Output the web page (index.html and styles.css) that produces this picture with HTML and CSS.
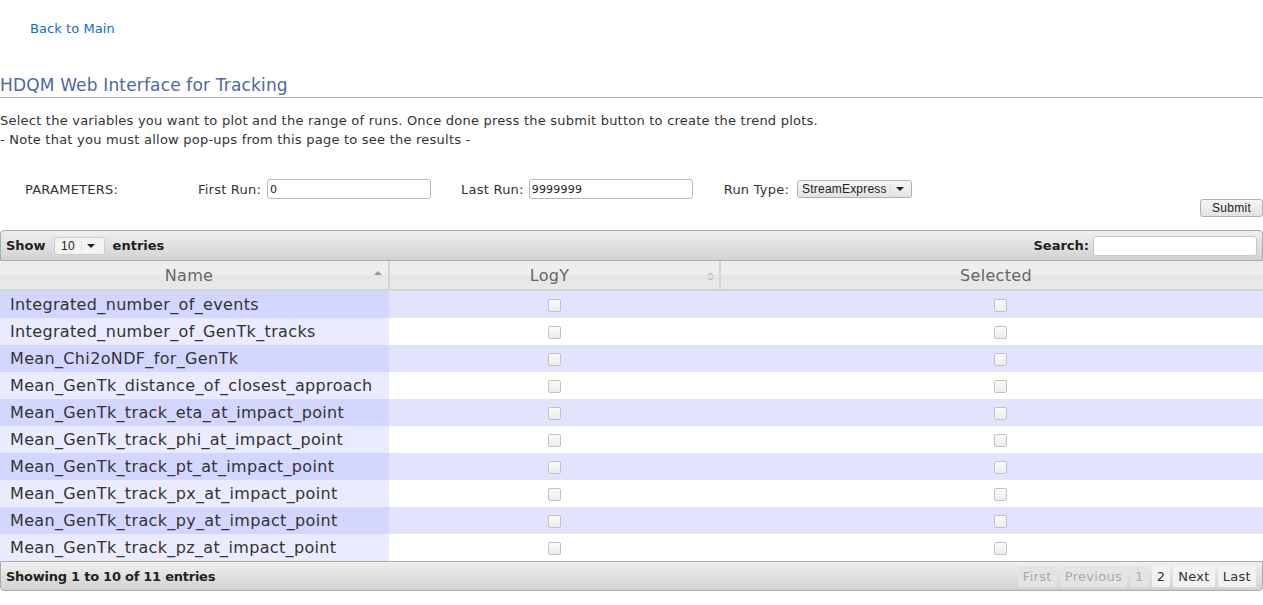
FILE: index.html
```html
<!DOCTYPE html>
<html>
<head>
<meta charset="utf-8">
<title>HDQM Web Interface for Tracking</title>
<link rel="stylesheet" href="styles.css">
</head>
<body>
<div class="top-link"><a href="#">Back to Main</a></div>
<h1 class="title">HDQM Web Interface for Tracking</h1>
<p class="intro">Select the variables you want to plot and the range of runs. Once done press the submit button to create the trend plots.<br>- Note that you must allow pop-ups from this page to see the results -</p>

<div class="params">
  <span class="plabel">PARAMETERS:</span>
  <label class="field f-first">First Run: <input class="txt" type="text" value="0"></label>
  <label class="field f-last">Last Run: <input class="txt" type="text" value="9999999"></label>
  <label class="field f-type">Run Type: <span class="sel sel-type">StreamExpress<span class="sel-arrow"></span></span></label>
</div>
<div class="submit-row"><button class="btn">Submit</button></div>

<div class="dt">
  <div class="dt-bar dt-top">
    <div class="dt-length">Show <span class="sel sel-len">10<span class="sel-arrow"></span></span> entries</div>
    <div class="dt-search">Search: <input class="search" type="text"></div>
  </div>
  <table class="grid">
    <thead>
      <tr>
        <th class="c-name">Name<span class="sort-asc"></span></th>
        <th class="c-log">LogY<span class="sort-both"><svg width="7" height="9" viewBox="0 0 7 9"><path d="M1 3.5 L3.5 1 L6 3.5 M1 5.5 L3.5 8 L6 5.5" fill="none" stroke="#999" stroke-width="1"/></svg></span></th>
        <th class="c-sel">Selected</th>
      </tr>
    </thead>
    <tbody>
      <tr class="odd"><td class="s1">Integrated_number_of_events</td><td><span class="cb"></span></td><td class="last"><span class="cb"></span></td></tr>
      <tr class="even"><td class="s1">Integrated_number_of_GenTk_tracks</td><td><span class="cb"></span></td><td class="last"><span class="cb"></span></td></tr>
      <tr class="odd"><td class="s1">Mean_Chi2oNDF_for_GenTk</td><td><span class="cb"></span></td><td class="last"><span class="cb"></span></td></tr>
      <tr class="even"><td class="s1">Mean_GenTk_distance_of_closest_approach</td><td><span class="cb"></span></td><td class="last"><span class="cb"></span></td></tr>
      <tr class="odd"><td class="s1">Mean_GenTk_track_eta_at_impact_point</td><td><span class="cb"></span></td><td class="last"><span class="cb"></span></td></tr>
      <tr class="even"><td class="s1">Mean_GenTk_track_phi_at_impact_point</td><td><span class="cb"></span></td><td class="last"><span class="cb"></span></td></tr>
      <tr class="odd"><td class="s1">Mean_GenTk_track_pt_at_impact_point</td><td><span class="cb"></span></td><td class="last"><span class="cb"></span></td></tr>
      <tr class="even"><td class="s1">Mean_GenTk_track_px_at_impact_point</td><td><span class="cb"></span></td><td class="last"><span class="cb"></span></td></tr>
      <tr class="odd"><td class="s1">Mean_GenTk_track_py_at_impact_point</td><td><span class="cb"></span></td><td class="last"><span class="cb"></span></td></tr>
      <tr class="even"><td class="s1">Mean_GenTk_track_pz_at_impact_point</td><td><span class="cb"></span></td><td class="last"><span class="cb"></span></td></tr>
    </tbody>
  </table>
  <div class="dt-bar dt-bottom">
    <div class="dt-info">Showing 1 to 10 of 11 entries</div>
    <div class="dt-pages">
      <span class="pg dis">First</span><span class="pg dis">Previous</span><span class="pg dis">1</span><span class="pg">2</span><span class="pg">Next</span><span class="pg">Last</span>
    </div>
  </div>
</div>
</body>
</html>
```

FILE: styles.css
```css
html, body {
  margin: 0;
  padding: 0;
  background: #fff;
  font-family: "DejaVu Sans", Verdana, sans-serif;
  font-size: 13px;
  color: #333;
  letter-spacing: 0.23px;
}
.top-link {
  padding: 21px 0 0 30px;
  line-height: 16px;
  letter-spacing: 0.08px;
}
.top-link a {
  color: #0f6bd0;
  text-decoration: none;
}
.title {
  margin: 38px 0 0 0;
  padding: 0 0 2px 0;
  font-size: 17px;
  font-weight: normal;
  line-height: 20px;
  letter-spacing: 0.16px;
  color: #4b69a3;
  border-bottom: 1px solid #aab6cb;
}
.intro {
  margin: 13px 0 0 0;
  line-height: 19px;
  color: #333;
}
.params {
  display: flex;
  align-items: center;
  margin-top: 30px;
  height: 20px;
}
.plabel {
  margin-left: 25px;
  width: 173px;
}
.field {
  display: flex;
  align-items: center;
}
.f-first .txt { margin-left: 6px; }
.f-last { margin-left: 30px; }
.f-type { margin-left: 31px; }
.txt {
  margin-left: 5px;
  width: 164px;
  height: 20px;
  box-sizing: border-box;
  border: 1px solid #b8b8b8;
  border-radius: 3px;
  padding: 0 2px;
  font-family: "DejaVu Sans", sans-serif;
  font-size: 11px;
  letter-spacing: 0.2px;
  color: #222;
  background: #fff;
}
.sel {
  display: inline-flex;
  align-items: center;
  box-sizing: border-box;
  height: 18px;
  border: 1px solid #b0b0b0;
  border-radius: 3px;
  background: linear-gradient(#f6f6f6, #e2e2e2);
  font-family: "Liberation Sans", Arial, sans-serif;
  font-size: 12px;
  letter-spacing: 0.2px;
  color: #222;
  padding-left: 4px;
}
.sel-arrow {
  display: inline-block;
  width: 18px;
  height: 10px;
  border-left: 1px solid #ddd;
  margin-left: 3px;
  position: relative;
}
.sel-arrow::after {
  content: "";
  position: absolute;
  left: 5px;
  top: 3px;
  border-left: 4px solid transparent;
  border-right: 4px solid transparent;
  border-top: 4px solid #222;
}
.sel-type {
  margin-left: 8px;
  width: 115px;
}
.submit-row {
  display: flex;
  justify-content: flex-end;
}
.btn {
  width: 63px;
  height: 18px;
  padding: 0;
  border: 1px solid #b0b0b0;
  border-radius: 3px;
  background: linear-gradient(#f6f6f6, #e2e2e2);
  font-family: "Liberation Sans", Arial, sans-serif;
  font-size: 12px;
  letter-spacing: 0.3px;
  color: #222;
}
.dt {
  margin-top: 13px;
}
.dt-bar {
  display: flex;
  justify-content: space-between;
  align-items: center;
  box-sizing: border-box;
  border: 1px solid #aaa;
  background: linear-gradient(#efefef, #d2d2d2);
  font-weight: bold;
  letter-spacing: 0;
  color: #222;
  padding: 0 5px;
}
.dt-top {
  height: 31px;
  border-radius: 4px 4px 0 0;
}
.dt-bottom {
  height: 30px;
  border-radius: 0 0 4px 4px;
  padding-right: 6px;
}
.sel-len {
  width: 51px;
  margin: 0 3px 0 4px;
  background: #f4f4f4;
  border-color: #ccc;
  padding-left: 6px;
  font-size: 12px;
  font-weight: normal;
}
.sel-len .sel-arrow { margin-left: 6px; }
.dt-search {
  display: flex;
  align-items: center;
}
.search {
  margin-left: 4px;
  width: 164px;
  height: 20px;
  box-sizing: border-box;
  border: 1px solid #c8c8c8;
  border-radius: 3px;
  background: #fff;
}
.grid {
  width: 100%;
  border-collapse: collapse;
  table-layout: fixed;
}
.grid th {
  height: 29px;
  box-sizing: border-box;
  background: linear-gradient(#eeeeee 0, #eeeeee 50%, #e6e6e6 50%, #e8e8e8 100%);
  border-right: 2px solid #d4d4d4;
  border-bottom: 2px solid #d4d4d4;
  font-size: 16px;
  font-weight: normal;
  letter-spacing: 0.3px;
  color: #666;
  position: relative;
  padding: 0 10px 0 0;
}
.grid th:last-child { border-right: none; padding-left: 18px; }
.c-name { width: 389px; }
.c-log { width: 331px; }
.sort-asc {
  position: absolute;
  right: 6px;
  top: 10px;
  border-left: 4px solid transparent;
  border-right: 4px solid transparent;
  border-bottom: 4px solid #999;
}
.sort-both {
  position: absolute;
  right: 5px;
  top: 5px;
}
.grid td {
  height: 27px;
  padding: 0;
  font-size: 16px;
  letter-spacing: 0.35px;
  color: #333;
  text-align: center;
}
.grid td.last { padding-left: 18px; }
.grid td.s1 {
  text-align: left;
  padding-left: 10px;
}
.odd td { background: #e2e4ff; }
.odd td.s1 { background: #d3d6ff; }
.even td { background: #fff; }
.even td.s1 { background: #eaebff; }
.cb {
  display: inline-block;
  width: 11px;
  height: 11px;
  border: 1px solid #c2c2c2;
  border-radius: 2px;
  background: linear-gradient(#fbfbfb, #ececec);
  vertical-align: middle;
}
.dt-info {
  letter-spacing: -0.25px;
}
.dt-pages {
  display: flex;
  gap: 3px;
  font-weight: normal;
  letter-spacing: 0.3px;
}
.pg {
  display: inline-block;
  height: 21px;
  line-height: 21px;
  padding: 0 5px;
  background: #f2f2f2;
  color: #333;
  border-radius: 2px;
}
.pg.dis {
  background: #e4e4e4;
  color: #aaa;
}
```
